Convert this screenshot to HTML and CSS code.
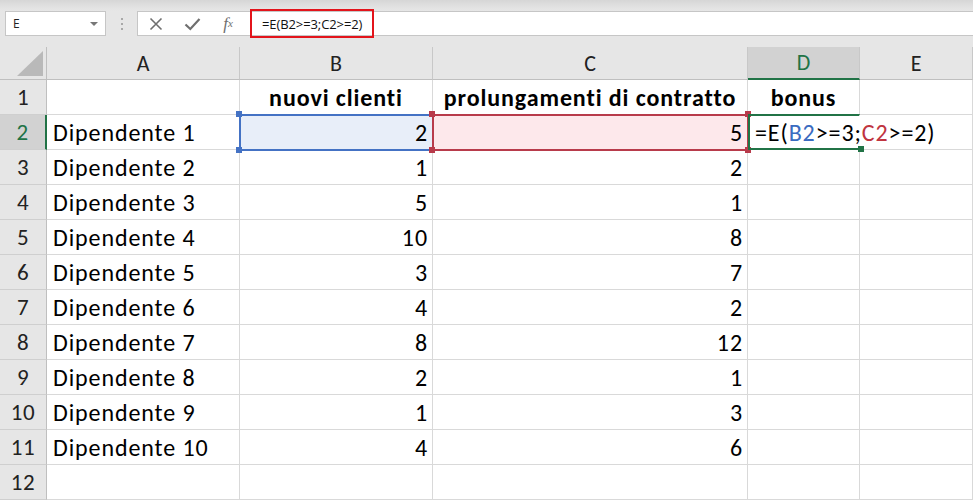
FILE: index.html
```html
<!DOCTYPE html>
<html lang="it">
<head>
<meta charset="utf-8">
<title>Excel</title>
<link rel="stylesheet" href="styles.css">
</head>
<body>
<div class="toolbar">
  <div class="namebox"><span>E</span><span class="caret"></span></div>
  <div class="dots"><i></i><i></i><i></i></div>
  <div class="fbar">
    <div class="fbtns">
      <span class="btn"><svg width="14" height="14" viewBox="0 0 14 14"><path d="M1.5 1.5 L12.5 12.5 M12.5 1.5 L1.5 12.5" stroke="#6f6f6f" stroke-width="1.6" fill="none"/></svg></span>
      <span class="btn"><svg width="17" height="14" viewBox="0 0 17 14"><path d="M1.5 7.5 L6.3 12 L15.5 2" stroke="#6f6f6f" stroke-width="2.2" fill="none"/></svg></span>
      <span class="btn fx">f<sub>x</sub></span>
    </div>
    <div class="ftext">=E(B2&gt;=3;C2&gt;=2)</div>
  </div>
</div>
<div class="sheet">
  <div class="corner"><span class="tri"></span></div>
  <div class="ch">A</div><div class="ch">B</div><div class="ch">C</div><div class="ch active">D</div><div class="ch">E</div>

  <div class="rh">1</div><div class="c"></div><div class="c b ctr">nuovi clienti</div><div class="c b ctr">prolungamenti di contratto</div><div class="c b ctr">bonus</div><div class="c"></div>

  <div class="rh active">2</div><div class="c">Dipendente 1</div>
  <div class="c n selB">2<span class="sq tl blue"></span><span class="sq bl blue"></span></div>
  <div class="c n selC">5<span class="sq tl red"></span><span class="sq bl red"></span><span class="sq tr red"></span><span class="sq br red"></span></div>
  <div class="c selD"><span class="edit">=E(<span class="rb">B2</span>&gt;=3;<span class="rc">C2</span>&gt;=2)</span><span class="sq brg"></span></div>
  <div class="c e2"></div>

  <div class="rh">3</div><div class="c">Dipendente 2</div><div class="c n">1</div><div class="c n">2</div><div class="c"></div><div class="c"></div>
  <div class="rh">4</div><div class="c">Dipendente 3</div><div class="c n">5</div><div class="c n">1</div><div class="c"></div><div class="c"></div>
  <div class="rh">5</div><div class="c">Dipendente 4</div><div class="c n">10</div><div class="c n">8</div><div class="c"></div><div class="c"></div>
  <div class="rh">6</div><div class="c">Dipendente 5</div><div class="c n">3</div><div class="c n">7</div><div class="c"></div><div class="c"></div>
  <div class="rh">7</div><div class="c">Dipendente 6</div><div class="c n">4</div><div class="c n">2</div><div class="c"></div><div class="c"></div>
  <div class="rh">8</div><div class="c">Dipendente 7</div><div class="c n">8</div><div class="c n">12</div><div class="c"></div><div class="c"></div>
  <div class="rh">9</div><div class="c">Dipendente 8</div><div class="c n">2</div><div class="c n">1</div><div class="c"></div><div class="c"></div>
  <div class="rh">10</div><div class="c">Dipendente 9</div><div class="c n">1</div><div class="c n">3</div><div class="c"></div><div class="c"></div>
  <div class="rh">11</div><div class="c">Dipendente 10</div><div class="c n">4</div><div class="c n">6</div><div class="c"></div><div class="c"></div>
  <div class="rh">12</div><div class="c"></div><div class="c"></div><div class="c"></div><div class="c"></div><div class="c"></div>
</div>
</body>
</html>
```
FILE: styles.css
```css
* { box-sizing: border-box; }
html, body { margin: 0; padding: 0; }
body {
  width: 973px;
  height: 504px;
  overflow: hidden;
  background: #fff;
  font-family: Carlito, Lato, "Open Sans", sans-serif;
  color: #000;
}
.toolbar {
  height: 47px;
  display: flex;
  align-items: flex-start;
  padding-top: 11px;
  background: linear-gradient(#d6d6d6 0, #e3e3e3 8px, #e6e6e6 11px, #e6e6e6 100%);
}
.namebox {
  margin-left: 5px;
  width: 101px;
  height: 25px;
  background: #fff;
  border: 1px solid #c6c6c6;
  display: flex;
  align-items: center;
  justify-content: space-between;
  padding: 0 7px 0 7px;
  font-family: "Open Sans", "Liberation Sans", sans-serif;
  font-size: 12px;
  color: #222;
}
.caret {
  width: 0; height: 0;
  border-left: 4px solid transparent;
  border-right: 4px solid transparent;
  border-top: 4px solid #777;
}
.dots {
  width: 31px;
  height: 25px;
  display: flex;
  flex-direction: column;
  align-items: center;
  justify-content: center;
  gap: 3px;
}
.dots i { display: block; width: 2px; height: 2px; background: #a8a8a8; }
.fbar {
  flex: 1;
  height: 25px;
  background: #fff;
  border: 1px solid #c6c6c6;
  border-right: none;
  display: flex;
  align-items: center;
}
.fbtns {
  width: 112px;
  display: flex;
  align-items: center;
}
.btn {
  width: 36px;
  display: flex;
  align-items: center;
  justify-content: center;
}
.fx {
  font-family: "Liberation Serif", serif;
  font-style: italic;
  font-size: 17px;
  color: #6f6f6f;
  line-height: 1;
}
.fx sub { font-size: 11px; vertical-align: -2px; }
.ftext {
  height: 29px;
  border: 2px solid #e3141b;
  display: flex;
  align-items: center;
  padding: 0 10px;
  font-family: "Open Sans", "Liberation Sans", sans-serif;
  font-size: 13px;
  color: #111;
  letter-spacing: -0.1px;
}
.sheet {
  display: grid;
  grid-template-columns: 47px 193px 193px 315px 112px 113px;
  grid-template-rows: 33px;
  grid-auto-rows: 35px;
  font-size: 24px;
  letter-spacing: 0.9px;
}
.corner {
  background: #e6e6e6;
  border-right: 1px solid #bfbfbf;
  border-bottom: 1px solid #bfbfbf;
  display: flex;
  align-items: flex-end;
  justify-content: flex-end;
  padding: 0 3px 3px 0;
}
.tri {
  width: 0; height: 0;
  border-left: 26px solid transparent;
  border-bottom: 25px solid #b9b9b9;
}
.ch {
  background: #e6e6e6;
  border-right: 1px solid #c8c8c8;
  border-bottom: 1px solid #bfbfbf;
  display: flex;
  align-items: center;
  justify-content: center;
  font-size: 22px;
  letter-spacing: 0;
  color: #222;
}
.ch.active {
  background: #d2d2d2;
  color: #217346;
  border-bottom: 2px solid #217346;
}
.rh {
  background: #e6e6e6;
  border-right: 1px solid #bfbfbf;
  border-bottom: 1px solid #cfcfcf;
  display: flex;
  align-items: center;
  justify-content: center;
  font-size: 23px;
  letter-spacing: 0.5px;
  color: #222;
}
.rh.active {
  background: #d2d2d2;
  color: #217346;
  border-right: 2px solid #217346;
}
.c {
  position: relative;
  border-right: 1px solid #d9d9d9;
  border-bottom: 1px solid #d9d9d9;
  display: flex;
  align-items: center;
  padding: 0 6px;
  white-space: nowrap;
}
.c.b { font-weight: bold; }
.c.ctr { justify-content: center; }
.c.n { justify-content: flex-end; padding-right: 4px; }
.selB {
  background: #e8eef9;
  outline: 2px solid #4472c4;
  outline-offset: -1px;
  z-index: 1;
}
.selC {
  background: #fde8eb;
  outline: 2px solid #b83b4b;
  outline-offset: -1px;
  z-index: 2;
}
.selD {
  border-top: 2px solid #217346;
  border-bottom: 2px solid #217346;
  border-left: 2px solid #217346;
  border-right-color: transparent;
  margin-top: -1px;
  padding-left: 5px;
  overflow: visible;
  z-index: 3;
}
.edit { position: relative; z-index: 4; }
.rb { color: #3a6bc0; }
.rc { color: #c0343f; }
.e2 { background: transparent; }
.sq {
  position: absolute;
  width: 6px;
  height: 6px;
}
.sq.blue { background: #4472c4; }
.sq.red { background: #b83b4b; }
.sq.tl { left: -4px; top: -4px; }
.sq.bl { left: -4px; bottom: -4px; }
.sq.tr { right: -4px; top: -4px; }
.sq.br { right: -4px; bottom: -4px; }
.sq.brg { background: #217346; right: -5px; bottom: -4px; }
```
